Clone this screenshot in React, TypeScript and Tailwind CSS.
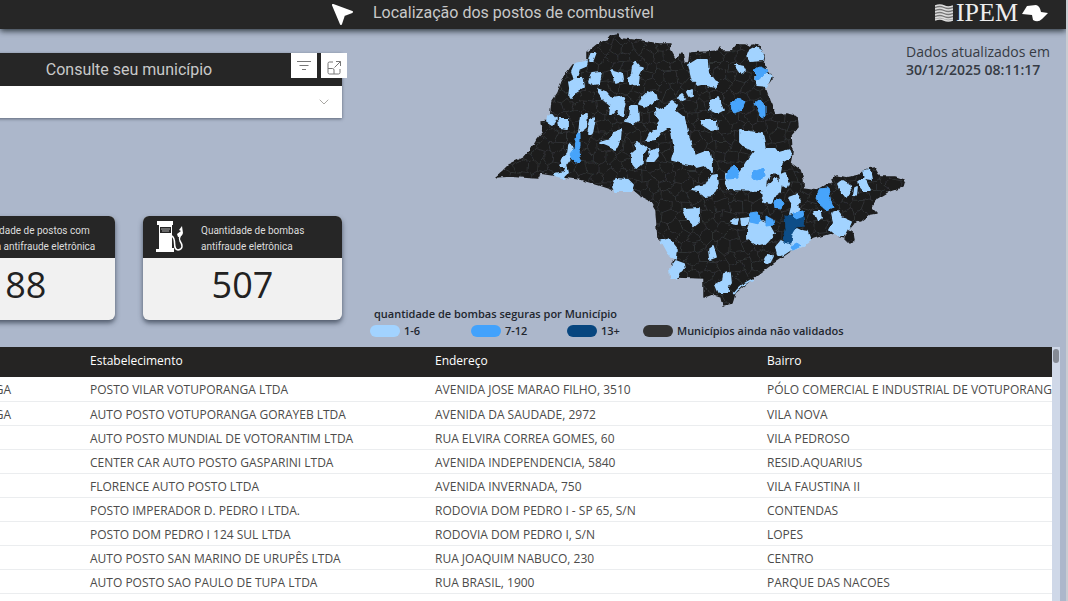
import { ChevronDown } from "lucide-react";

interface Station {
  city: string;
  name: string;
  address: string;
  district: string;
}

const stations: Station[] = [
  { city: "VOTUPORANGA", name: "POSTO VILAR VOTUPORANGA LTDA", address: "AVENIDA JOSE MARAO FILHO, 3510", district: "PÓLO COMERCIAL E INDUSTRIAL DE VOTUPORANGA" },
  { city: "VOTUPORANGA", name: "AUTO POSTO VOTUPORANGA GORAYEB LTDA", address: "AVENIDA DA SAUDADE, 2972", district: "VILA NOVA" },
  { city: "", name: "AUTO POSTO MUNDIAL DE VOTORANTIM LTDA", address: "RUA ELVIRA CORREA GOMES, 60", district: "VILA PEDROSO" },
  { city: "", name: "CENTER CAR AUTO POSTO GASPARINI LTDA", address: "AVENIDA INDEPENDENCIA, 5840", district: "RESID.AQUARIUS" },
  { city: "", name: "FLORENCE AUTO POSTO LTDA", address: "AVENIDA INVERNADA, 750", district: "VILA FAUSTINA II" },
  { city: "", name: "POSTO IMPERADOR D. PEDRO I LTDA.", address: "RODOVIA DOM PEDRO I - SP 65, S/N", district: "CONTENDAS" },
  { city: "", name: "POSTO DOM PEDRO I 124 SUL LTDA", address: "RODOVIA DOM PEDRO I, S/N", district: "LOPES" },
  { city: "", name: "AUTO POSTO SAN MARINO DE URUPÊS LTDA", address: "RUA JOAQUIM NABUCO, 230", district: "CENTRO" },
  { city: "", name: "AUTO POSTO SAO PAULO DE TUPA LTDA", address: "RUA BRASIL, 1900", district: "PARQUE DAS NACOES" },
];

const legend = [
  { label: "1-6", swatch: "bg-[#a2d3ff]", cell: "w-[101px]" },
  { label: "7-12", swatch: "bg-[#42a2fc]", cell: "w-[96px]" },
  { label: "13+", swatch: "bg-[#07467f]", cell: "w-[76px]" },
  { label: "Municípios ainda não validados", swatch: "bg-[#333333]", cell: "" },
];

const STATE =
  "496,177 502,172 510,164 523,158 532,148 537,139 543,132 541,122 550,121 552,102 558,93 562,82 568,72 573,65 587,62 587,52 597,44 607,41 611,36 618,35 621,39 632,40 647,42 658,44 671,44 670,50 675,59 679,57 682,53 684,63 689,63 690,53 707,52 718,51 720,47 722,51 732,51 737,45 745,45 750,48 753,44 757,45 765,55 763,63 768,72 772,78 765,88 770,102 775,115 787,114 797,117 798,127 791,135 792,153 790,163 800,170 803,180 803,189 817,191 827,185 834,185 832,179 837,176 847,178 860,175 864,170 875,168 880,177 895,177 904,180 902,187 887,192 877,198 870,207 876,213 870,214 862,220 853,223 847,230 853,234 854,240 850,243 846,239 849,234 845,231 845,237 830,233 813,238 795,248 773,263 753,278 735,293 732,303 723,305 721,297 712,294 704,297 704,278 677,277 671,277 672,265 675,258 662,242 658,238 656,210 650,200 640,195 633,189 612,189 600,185 580,179 565,177 553,175 540,173 538,178 523,177 510,176";

const LOW = [
  "572,71 575,64 587,61 586,66 579,69 577,76 574,78",
  "590,61 592,53 596,53 593,61",
  "589,82 592,73 601,72 599,84 594,85",
  "612,70 622,73 623,80 615,83",
  "633,66 635,62 639,67 643,68 639,76 638,84 629,85 628,79 632,74",
  "569,82 575,79 582,79 583,87 576,91 572,98 569,96 570,88",
  "597,89 606,92 612,99 623,97 625,102 622,117 616,109 610,115 611,105 602,97",
  "643,97 648,92 656,95 657,100 649,104 645,107 639,105",
  "631,106 637,106 638,120 634,123 625,121 630,116",
  "548,117 552,114 556,119 552,125 547,122",
  "559,119 568,119 568,129 560,128",
  "581,116 587,115 586,128 579,133 580,123",
  "591,119 595,118 592,134 588,134",
  "614,132 621,130 620,140 615,149 600,143 610,140",
  "569,145 573,147 571,157 565,166 560,165 563,158 568,153",
  "554,174 564,172 566,167 567,172 564,178 557,177",
  "613,187 616,179 628,180 633,185 631,191 615,191",
  "636,142 642,145 646,148 642,154 643,162 636,168 632,163 632,154 637,150",
  "649,150 653,151 657,149 658,156 654,161 648,161 650,156",
  "656,108 662,111 667,105 672,101 677,105 675,111 684,118 686,126 688,136 693,150 696,158 694,165 684,163 672,160 675,150 672,132 669,127 661,132 656,139 647,140 650,134 657,130 661,120 656,113",
  "678,97 682,94 685,98 681,100",
  "689,65 697,60 707,60 708,73 714,81 718,83 714,87 702,84 698,85 692,79",
  "687,92 692,90 692,95 689,96",
  "712,100 718,98 723,110 717,113 709,109",
  "701,121 716,121 717,129 711,130 702,124",
  "750,50 756,47 764,53 763,60 750,61 748,55",
  "735,65 744,67 746,71 741,74",
  "756,77 764,72 771,76 767,86 757,85",
  "740,130 750,132 762,134 765,149 775,149 778,153 789,150 790,157 782,162 780,173 771,172 766,181 765,190 759,190 758,179 749,176 741,176 735,190 727,185 726,175 735,170 741,172 746,163 755,151 745,147 740,142",
  "697,155 705,152 710,153 712,163 712,172 705,165 697,167 692,162",
  "711,176 717,175 718,184 712,195 705,196 698,191 692,190 697,187 706,185",
  "726,174 742,172 757,180 765,185 762,190 728,189",
  "768,186 776,178 781,184 780,192 774,196 771,203 764,202 762,193",
  "780,175 785,173 788,183 786,187 781,184",
  "789,198 797,195 800,201 797,205 799,211 790,214 792,206",
  "684,210 699,209 699,222 694,226 688,220",
  "751,219 757,220 769,225 774,234 769,240 765,244 758,245 748,239 748,230",
  "731,221 738,219 737,224 732,223",
  "741,219 749,218 747,225 742,225",
  "792,232 797,229 801,231 808,232 811,240 803,246 792,250",
  "776,247 781,241 790,245 793,248 784,254 778,256",
  "764,260 767,255 773,256 770,262 765,263",
  "661,241 669,239 677,249 676,259 671,257 667,252",
  "671,278 670,269 676,261 684,264 685,269 679,272 676,278",
  "709,249 713,246 716,257 710,259",
  "716,285 723,281 724,274 730,273 731,283 728,287 728,292 719,292",
  "814,212 821,212 822,219 818,221",
  "832,213 837,211 842,218 851,222 845,235 836,235 830,230 834,223",
  "838,185 843,181 850,185 851,191 846,198 841,192",
  "855,188 857,187 856,196 854,196",
  "859,180 864,178 870,191 864,191 860,186",
  "863,171 869,169 871,179 865,178",
];

const MID = [
  "577,133 580,134 580,147 578,152 582,161 575,162 570,155 575,148",
  "732,103 738,98 745,102 742,110 734,113 731,108",
  "755,103 759,100 766,106 766,115 762,118 758,110",
  "752,70 760,67 768,70 764,75 756,80 757,75",
  "727,171 734,165 739,170 739,178 727,179",
  "753,172 764,168 765,177 757,180 753,178",
  "816,197 820,189 828,188 831,202 833,207 826,210 818,203",
  "774,201 780,199 784,202 782,209 775,208",
  "750,213 757,212 760,220 759,224 750,222",
  "766,216 773,220 774,225 766,226",
  "793,213 803,211 804,221 794,220",
  "791,246 797,243 801,246 793,250",
];

const HIGH = "785,215 793,216 796,220 804,217 803,226 796,227 792,233 791,244 784,242 786,230";

// Deterministic pseudo-random offset in the range -1..1
const noise = (a: number, b: number) => {
  const v = Math.sin(a * 127.1 + b * 311.7) * 43758.5453;
  return (v - Math.floor(v)) * 2 - 1;
};

// Irregular honeycomb that stands for the municipal borders
function buildBorders() {
  const stepX = 6;
  const stepY = 10;
  const point = (c: number, r: number) => {
    const shift = (c + r) % 2 === 0 ? 0 : 3;
    const x = 490 + c * stepX + noise(c, r) * 3;
    const y = 30 + r * stepY + shift + noise(r + 50, c) * 3;
    return `${x.toFixed(1)} ${y.toFixed(1)}`;
  };
  let d = "";
  for (let r = 0; r < 29; r++) {
    for (let c = 0; c < 71; c++) {
      d += `M${point(c, r)}L${point(c + 1, r)}`;
      if ((c + r) % 2 !== 0) d += `M${point(c, r)}L${point(c, r + 1)}`;
    }
  }
  return d;
}

const borders = buildBorders();

function StateMap() {
  return (
    <svg viewBox="490 31 416 276" className="block h-[276px] w-[416px]" role="img" aria-label="Mapa">
      <defs>
        <clipPath id="state">
          <polygon points={STATE} />
        </clipPath>
        <filter id="rough" x="-5%" y="-5%" width="110%" height="110%">
          <feTurbulence type="fractalNoise" baseFrequency="0.16" numOctaves="2" seed="4" />
          <feDisplacementMap in="SourceGraphic" scale="4" xChannelSelector="R" yChannelSelector="G" />
        </filter>
      </defs>
      <g filter="url(#rough)" strokeLinejoin="round">
        <polygon points={STATE} fill="#1b1b1b" stroke="#1b1b1b" strokeWidth="1.5" />
        <path d={borders} clipPath="url(#state)" fill="none" stroke="#3a3c40" strokeWidth="0.7" />
        {LOW.map((p) => (
          <polygon key={p} points={p} fill="#a2d3ff" stroke="#a2d3ff" strokeWidth="1.8" />
        ))}
        {MID.map((p) => (
          <polygon key={p} points={p} fill="#47a4fb" stroke="#47a4fb" />
        ))}
        <polygon points={HIGH} fill="#0b4d88" stroke="#0b4d88" />
        <path d="M734 294C738 288 745 283 753 279" fill="none" stroke="#a2d3ff" strokeWidth="1.5" />
      </g>
    </svg>
  );
}

function PumpIcon() {
  return (
    <svg viewBox="0 0 30 32" className="h-8 w-[30px] shrink-0" aria-hidden="true">
      <path fill="#fff" d="M2 0h16v4h-1v23h2v4H1v-3h3V4H2z" />
      <path fill="#262626" d="M5 6h11v6H5z" />
      <path stroke="#aaa" d="M6 8h9M7 10h7" />
      <path fill="none" stroke="#fff" strokeWidth="1.5" d="M17 15c5 3 0 14 6 14 6-1 4-6 2-9-2-4 1-5 1-8" />
      <path fill="#fff" d="M27 5l1 7q-1 4-5 4l-1-3 4-3-2-1z" />
    </svg>
  );
}

function Logo() {
  return (
    <div className="flex items-center text-[#ededed]">
      <svg viewBox="0 0 18 18" className="h-[18px] w-[18px]" aria-hidden="true">
        <path fill="#777" d="M0 2q5-2 9 0t9 0v14q-5 2-9 0t-9 0z" />
        <path
          fill="none"
          stroke="#dedede"
          strokeWidth="1.5"
          d="M0 2q5-2 9 0t9 0M0 5q5-2 9 0t9 0M0 8q5-2 9 0t9 0M0 11q5-2 9 0t9 0M0 14q5-2 9 0t9 0M0 16q5-2 9 0t9 0"
        />
      </svg>
      <span className="ml-[3px] font-['Liberation_Serif',serif] text-[26px] leading-6">IPEM</span>
      <svg viewBox="0 0 26 18" className="ml-1 h-[18px] w-[26px]" aria-hidden="true">
        <path fill="#fff" d="M0 10L5 2 14 1q4 1 5 7l7 1-6 6q-4 4-9 1l-1-5z" />
      </svg>
    </div>
  );
}

function StatCard({ lines, value, icon }: { lines: string[]; value: string; icon?: boolean }) {
  return (
    <article className="w-[199px] shrink-0 overflow-hidden rounded-md bg-[#f1f1f1] shadow-[0_3px_5px_rgba(40,50,65,0.7)]">
      <header
        className={`flex h-[42px] items-center bg-[#262626] pl-3 font-[Roboto,sans-serif] text-[10px] leading-4 text-[#dddddd] ${
          icon ? "gap-4" : "gap-3"
        }`}
      >
        {icon ? <PumpIcon /> : <span className="w-[30px] shrink-0" />}
        <p className="whitespace-nowrap pt-1">
          {lines[0]}
          <br />
          {lines[1]}
        </p>
      </header>
      <p className="pb-3 pt-1 text-center text-4xl leading-[46px] text-[#222222]">{value}</p>
    </article>
  );
}

export default function App() {
  return (
    <div className="flex h-screen flex-col overflow-hidden border-r-2 border-[#c8ccd2] bg-[#acb7cb] font-['Open_Sans',sans-serif]">
      <header className="relative flex h-[29px] shrink-0 items-center bg-[#262626] pr-[18px] shadow-[0_2px_6px_rgba(30,40,45,0.9)]">
        <span className="w-[331px] shrink-0" />
        <svg viewBox="0 0 22 24" className="h-6 w-[22px]" aria-hidden="true">
          <path fill="#fff" stroke="#fff" strokeLinejoin="round" strokeWidth="2" d="M2 2L21 9 13 12 10 21z" />
        </svg>
        <h1 className="ml-5 pb-1 font-[Roboto,sans-serif] text-base text-[#c9c9c9]">
          Localização dos postos de combustível
        </h1>
        <div className="ml-auto pb-1">
          <Logo />
        </div>
      </header>

      <main className="flex min-h-0 flex-1 flex-col">
        <div className="flex h-[318px] shrink-0">
          <div className="flex w-[342px] shrink-0 flex-col items-end">
            <section className="relative mt-6 w-[426px] bg-white shadow-[0_1px_3px_rgba(40,50,65,0.6)]">
              <label
                htmlFor="municipio"
                className="block h-[33px] bg-[#262626] text-center font-[Roboto,sans-serif] text-base leading-[34px] text-[#c9c9c9]"
              >
                Consulte seu município
              </label>
              <select id="municipio" className="block h-8 w-full appearance-none bg-white px-3 text-xs" />
              <ChevronDown className="pointer-events-none absolute bottom-2 right-2.5 h-4 w-4 text-[#aaa8a4]" strokeWidth={1.5} />
              <div className="absolute -right-[5px] top-0 flex gap-1">
                <button type="button" aria-label="Filtros" className="flex h-[25px] w-[26px] items-center justify-center bg-white">
                  <svg viewBox="0 0 14 12" className="h-3 w-3.5" fill="none" stroke="#777">
                    <path d="M0 1.5h14M2.5 5.5h9M5 9.5h4" />
                  </svg>
                </button>
                <button type="button" aria-label="Modo de foco" className="flex h-[25px] w-[26px] items-end justify-center bg-white pb-[3px]">
                  <svg viewBox="0 0 15 15" className="h-[15px] w-[15px]" fill="none" stroke="#777">
                    <path d="M6 2H2.500Q1 2 1 3.500V12.500Q1 14 2.500 14H11.500Q13 14 13 12.500V9M1 8.500H5.500Q7 8.500 7 10V14M7.500 7.500L13.500 1.500M9 1.500H13.500V6" />
                  </svg>
                </button>
              </div>
            </section>
            <div className="mt-[98px] flex gap-7">
              <StatCard lines={["Quantidade de postos com", "bomba antifraude eletrônica"]} value="188" />
              <StatCard lines={["Quantidade de bombas", "antifraude eletrônica"]} value="507" icon />
            </div>
          </div>

          <section className="ml-7 shrink-0 pt-0.5">
            <div className="pl-[120px]">
              <StateMap />
            </div>
            <h2 className="pl-1 text-[11px] font-semibold leading-[14px] text-[#22262e]">
              quantidade de bombas seguras por Município
            </h2>
            <ul className="mt-1 flex text-[11px] font-semibold leading-3 text-[#22262e]">
              {legend.map((l) => (
                <li key={l.label} className={`flex items-center gap-1 whitespace-nowrap ${l.cell}`}>
                  <span className={`h-3 w-[30px] shrink-0 rounded-full ${l.swatch}`} />
                  {l.label}
                </li>
              ))}
            </ul>
          </section>

          <p className="whitespace-nowrap pt-3.5 text-sm leading-[18px] text-[#363b44]">
            Dados atualizados em
            <br />
            <span className="font-semibold">30/12/2025 08:11:17</span>
          </p>
        </div>

        <div className="flex min-h-0 flex-1 pr-1.5">
          <div className="min-w-0 flex-1 overflow-hidden bg-white">
            <table className="w-full table-fixed border-collapse text-left text-xs">
              <colgroup>
                <col className="w-[83px]" />
                <col className="w-[345px]" />
                <col className="w-[332px]" />
                <col />
              </colgroup>
              <thead>
                <tr className="h-[30px] bg-[#252423] text-white">
                  <th aria-label="Município" />
                  <th className="px-[7px] pb-0.5 font-normal">Estabelecimento</th>
                  <th className="px-[7px] pb-0.5 font-normal">Endereço</th>
                  <th className="px-[7px] pb-0.5 font-normal">Bairro</th>
                </tr>
              </thead>
              <tbody className="text-[#4c4b4a]">
                {stations.map((s) => (
                  <tr key={s.name} className="h-6 border-b border-[#ebedef]">
                    <td className="p-0 pt-[3px]">
                      <div className="flex justify-end overflow-hidden pr-[72px]">{s.city}</div>
                    </td>
                    <td className="whitespace-nowrap px-[7px] pb-0 pt-[3px]">{s.name}</td>
                    <td className="whitespace-nowrap px-[7px] pb-0 pt-[3px]">{s.address}</td>
                    <td className="overflow-hidden whitespace-nowrap pb-0 pl-[7px] pr-0 pt-[3px]">{s.district}</td>
                  </tr>
                ))}
              </tbody>
            </table>
          </div>
          <div className="w-2 shrink-0 bg-[#cfd8e8] px-px pt-0.5">
            <div className="h-3.5 rounded-full bg-[#858a94]" />
          </div>
        </div>
      </main>
    </div>
  );
}
